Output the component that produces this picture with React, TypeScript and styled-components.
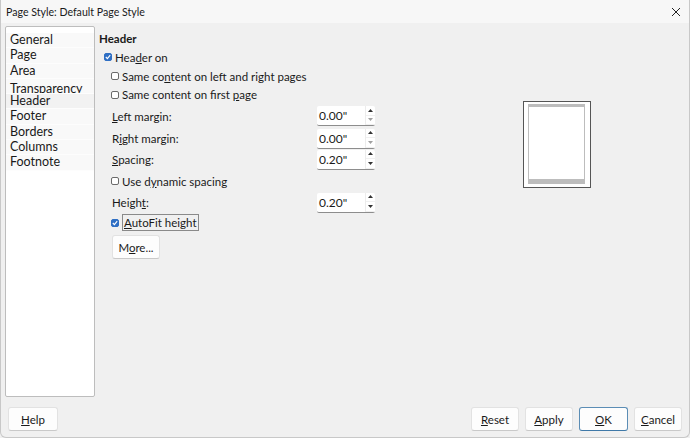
import { createGlobalStyle } from "styled-components";
import styled from "styled-components";

const Global = createGlobalStyle`
    html, body {
        margin: 0;
        padding: 0;
        background: #f0f0f0;
    }
    * {
        box-sizing: border-box;
    }
`;

const Window = styled.div`
    width: 690px;
    height: 438px;
    display: flex;
    flex-direction: column;
    background: #f0f0f0;
    font-family: Lato, "Noto Sans", sans-serif;
    font-size: 11.5px;
    color: #1a1a1a;
    border: 1px solid #c8c8c8;
    border-top: none;
    border-radius: 0 0 6px 6px;
    overflow: hidden;
`;

const TitleBar = styled.div`
    height: 23px;
    flex: none;
    display: flex;
    align-items: center;
    justify-content: space-between;
    padding: 0 8px 0 5px;
    background: #f7f7f7;
    font-size: 10.6px;
`;

const Body = styled.div`
    flex: 1;
    display: flex;
    padding: 3px 0 0 4px;
    min-height: 0;
`;

const SideList = styled.div`
    width: 90px;
    height: 371px;
    flex: none;
    background: #fff;
    border: 1px solid #bdbdbd;
    border-radius: 2px;
    overflow: hidden;
`;

const SideInner = styled.div`
    margin-top: 6px;
`;

const SideItem = styled.div<{ $active?: boolean; $clip?: boolean }>`
    height: 15.3px;
    line-height: 14px;
    padding-left: 4px;
    padding-top: ${(p) => (p.$clip ? 3 : 0)}px;
    font-size: 12.5px;
    background: ${(p) => (p.$active ? "#f2f2f2" : "#f9f9f9")};
    border-bottom: 1px solid #fdfdfd;
    overflow: hidden;
    white-space: nowrap;
`;

const Content = styled.div`
    flex: 1;
    padding: 4px 0 0 4px;
    display: flex;
`;

const Form = styled.div`
    width: 300px;
    display: flex;
    flex-direction: column;
`;

const SectionTitle = styled.div`
    font-weight: bold;
    height: 17px;
    line-height: 17px;
`;

const CheckRow = styled.label<{ $indent: number; $h: number }>`
    display: flex;
    align-items: center;
    gap: 3px;
    height: ${(p) => p.$h}px;
    padding-left: ${(p) => p.$indent}px;
    white-space: nowrap;
`;

const Box = styled.span<{ $on?: boolean }>`
    width: 8px;
    height: 8px;
    flex: none;
    border-radius: 2px;
    border: 1px solid ${(p) => (p.$on ? "#2f6fc4" : "#6b6b6b")};
    background: ${(p) => (p.$on ? "#2f6fc4" : "#fff")};
    display: flex;
    align-items: center;
    justify-content: center;
`;

const Focus = styled.span`
    border: 1px solid #8a8a8a;
    padding: 0 1px;
    line-height: 15px;
`;

const FieldRow = styled.div<{ $h: number }>`
    display: flex;
    align-items: center;
    height: ${(p) => p.$h}px;
    padding-left: 13px;
`;

const FieldLabel = styled.span`
    width: 205px;
`;

const Spin = styled.div`
    display: flex;
    width: 58px;
    height: 20px;
    background: #fff;
    border-bottom: 1px solid #8d8d8d;
    border-radius: 2px;
`;

const SpinValue = styled.span`
    flex: 1;
    padding-left: 2px;
    line-height: 20px;
    font-size: 12px;
`;

const SpinArrows = styled.div`
    width: 10px;
    display: flex;
    flex-direction: column;
    border-left: 1px solid #ececec;
`;

const Arrow = styled.span`
    flex: 1;
    display: flex;
    align-items: center;
    justify-content: center;
    border-bottom: 1px solid #f0f0f0;
`;

const Button = styled.button<{ $default?: boolean; $w: number }>`
    width: ${(p) => p.$w}px;
    height: 24px;
    font-family: inherit;
    font-size: 11.5px;
    color: #1a1a1a;
    background: #fdfdfd;
    border: 1px solid ${(p) => (p.$default ? "#5b8db5" : "#e2e2e2")};
    border-bottom-color: ${(p) => (p.$default ? "#3f79a8" : "#c9c9c9")};
    border-radius: 3px;
    padding: 0;
`;

const MoreWrap = styled.div`
    padding: 3px 0 0 13px;
`;

const PreviewArea = styled.div`
    flex: 1;
    display: flex;
    align-items: flex-start;
    padding: 71px 0 0 124px;
`;

const Preview = styled.div`
    width: 68px;
    height: 87px;
    border: 1px solid #555;
    background: #fff;
    padding: 2px 5px 3px 4px;
    display: flex;
`;

const Page = styled.div`
    flex: 1;
    border: 1px solid #bdbdbd;
    border-top-width: 3px;
    border-bottom-width: 5px;
    background: #fff;
`;

const Footer = styled.div`
    height: 37px;
    flex: none;
    display: flex;
    align-items: flex-start;
    padding: 7px 7px 0 7px;
    gap: 6px;
`;

const Spacer = styled.div`
    flex: 1;
`;

const U = styled.span`
    text-decoration: underline;
    text-underline-offset: 1px;
`;

function Check({ on }: { on?: boolean }) {
    return (
        <Box $on={on}>
            {on && (
                <svg width="6" height="6" viewBox="0 0 6 6">
                    <path d="M0.8 3 L2.4 4.6 L5.2 1.2" stroke="#fff" strokeWidth="1.1" fill="none" />
                </svg>
            )}
        </Box>
    );
}

function Tri({ up, dim }: { up?: boolean; dim?: boolean }) {
    return (
        <svg width="5" height="3" viewBox="0 0 5 3">
            <path d={up ? "M0 3 L2.5 0 L5 3 Z" : "M0 0 L2.5 3 L5 0 Z"} fill={dim ? "#a0a0a0" : "#333"} />
        </svg>
    );
}

function SpinField({ value, dimDown }: { value: string; dimDown?: boolean }) {
    return (
        <Spin>
            <SpinValue>{value}</SpinValue>
            <SpinArrows>
                <Arrow><Tri up /></Arrow>
                <Arrow><Tri dim={dimDown} /></Arrow>
            </SpinArrows>
        </Spin>
    );
}

function CloseX() {
    return (
        <svg width="10" height="10" viewBox="0 0 10 10">
            <path d="M1 1 L9 9 M9 1 L1 9" stroke="#222" strokeWidth="1" />
        </svg>
    );
}

const sections = ["General", "Page", "Area", "Transparency", "Header", "Footer", "Borders", "Columns", "Footnote"];

function App() {
    return (
        <Window>
            <Global />
            <TitleBar>
                <span>Page Style: Default Page Style</span>
                <CloseX />
            </TitleBar>
            <Body>
                <SideList>
                    <SideInner>
                        {sections.map((s) => (
                            <SideItem key={s} $active={s === "Header"} $clip={s === "Transparency"}>
                                {s}
                            </SideItem>
                        ))}
                    </SideInner>
                </SideList>
                <Content>
                    <Form>
                        <SectionTitle>Header</SectionTitle>
                        <CheckRow $indent={5} $h={20}>
                            <Check on />
                            <span>Hea<U>d</U>er on</span>
                        </CheckRow>
                        <CheckRow $indent={12} $h={18.5}>
                            <Check />
                            <span>Same co<U>n</U>tent on left and right pages</span>
                        </CheckRow>
                        <CheckRow $indent={12} $h={18.5}>
                            <Check />
                            <span>Same content on first <U>p</U>age</span>
                        </CheckRow>
                        <FieldRow $h={24}>
                            <FieldLabel><U>L</U>eft margin:</FieldLabel>
                            <SpinField value={'0.00"'} dimDown />
                        </FieldRow>
                        <FieldRow $h={21}>
                            <FieldLabel>R<U>i</U>ght margin:</FieldLabel>
                            <SpinField value={'0.00"'} dimDown />
                        </FieldRow>
                        <FieldRow $h={21}>
                            <FieldLabel><U>S</U>pacing:</FieldLabel>
                            <SpinField value={'0.20"'} />
                        </FieldRow>
                        <CheckRow $indent={12} $h={22}>
                            <Check />
                            <span>Use d<U>y</U>namic spacing</span>
                        </CheckRow>
                        <FieldRow $h={21}>
                            <FieldLabel>Heigh<U>t</U>:</FieldLabel>
                            <SpinField value={'0.20"'} />
                        </FieldRow>
                        <CheckRow $indent={12} $h={19}>
                            <Check on />
                            <Focus><U>A</U>utoFit height</Focus>
                        </CheckRow>
                        <MoreWrap>
                            <Button $w={48}>M<U>o</U>re...</Button>
                        </MoreWrap>
                    </Form>
                    <PreviewArea>
                        <Preview>
                            <Page />
                        </Preview>
                    </PreviewArea>
                </Content>
            </Body>
            <Footer>
                <Button $w={50}><U>H</U>elp</Button>
                <Spacer />
                <Button $w={48}><U>R</U>eset</Button>
                <Button $w={48}><U>A</U>pply</Button>
                <Button $w={49} $default><U>O</U>K</Button>
                <Button $w={48}><U>C</U>ancel</Button>
            </Footer>
        </Window>
    );
}

export default App;
